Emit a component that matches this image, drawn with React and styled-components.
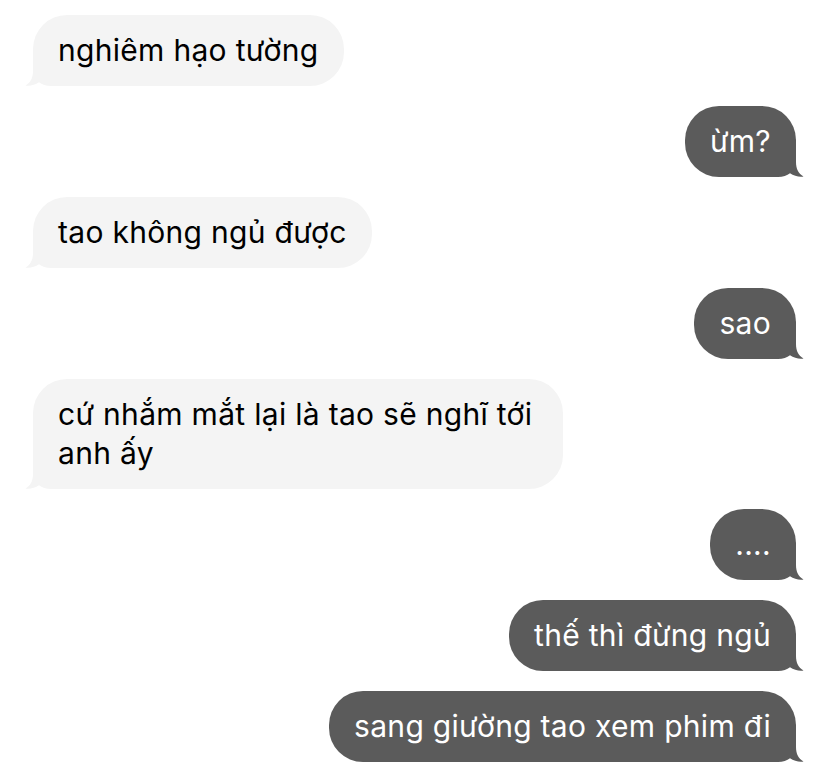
import React from 'react'
import styled, { createGlobalStyle } from 'styled-components'

const GlobalStyle = createGlobalStyle`
  html, body {
    margin: 0;
    padding: 0;
    background: #ffffff;
  }
  body {
    font-family: Inter, "Noto Sans", "Liberation Sans", sans-serif;
    -webkit-font-smoothing: antialiased;
  }
`

const Thread = styled.div`
  display: flex;
  flex-direction: column;
  gap: 20px;
  padding: 15px 32px 0 33px;
`

const Row = styled.div`
  display: flex;
  justify-content: ${(p) => (p.$me ? 'flex-end' : 'flex-start')};
`

const Bubble = styled.div`
  position: relative;
  max-width: 530px;
  box-sizing: border-box;
  padding: 16px 25px;
  border-radius: 34px;
  background: ${(p) => (p.$me ? '#5b5b5b' : '#f4f4f4')};
  color: ${(p) => (p.$me ? '#ffffff' : '#000000')};
  font-size: 30px;
  line-height: 39px;
  letter-spacing: 0.3px;
`

const Text = styled.span`
  position: relative;
  z-index: 1;
`

const Tail = styled.svg`
  position: absolute;
  bottom: 0;
  width: 42px;
  height: 34px;
  ${(p) =>
    p.$me
      ? 'right: -8px;'
      : 'left: -8px; transform: scaleX(-1);'}
`

function BubbleTail({ me }) {
  return (
    <Tail $me={me} viewBox="0 0 42 34">
      <path
        d="M0 0 H34 V19 C34 26 36.5 30.5 41.5 33.6 C37 34.3 32 33 28 30.3 C25 32.6 21 34 16 34 H0 Z"
        fill={me ? '#5b5b5b' : '#f4f4f4'}
      />
    </Tail>
  )
}

const messages = [
  { me: false, text: 'nghiêm hạo tường' },
  { me: true, text: 'ừm?' },
  { me: false, text: 'tao không ngủ được' },
  { me: true, text: 'sao' },
  { me: false, text: 'cứ nhắm mắt lại là tao sẽ nghĩ tới anh ấy' },
  { me: true, text: '....' },
  { me: true, text: 'thế thì đừng ngủ' },
  { me: true, text: 'sang giường tao xem phim đi' },
]

export default function App() {
  return (
    <>
      <GlobalStyle />
      <Thread>
        {messages.map((m, i) => (
          <Row key={i} $me={m.me}>
            <Bubble $me={m.me}>
              <BubbleTail me={m.me} />
              <Text>{m.text}</Text>
            </Bubble>
          </Row>
        ))}
      </Thread>
    </>
  )
}
